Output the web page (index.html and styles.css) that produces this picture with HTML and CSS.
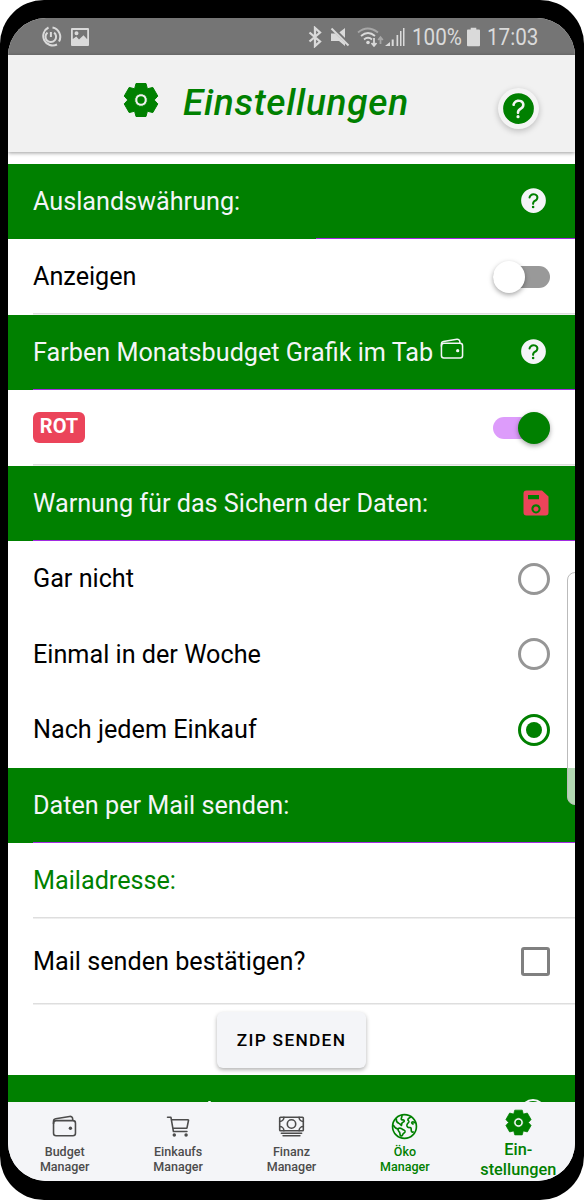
FILE: index.html
```html
<!DOCTYPE html>
<html lang="de">
<head>
<meta charset="utf-8">
<title>Einstellungen</title>
<link rel="stylesheet" href="styles.css">
</head>
<body>
<svg class="defs" width="0" height="0">
  <symbol id="gear" viewBox="-18 -18 36 36">
    <path fill="currentColor" stroke="currentColor" stroke-width="1" stroke-linejoin="round" fill-rule="evenodd" d="M-5-16.500H5L6.400-11.200L11.800-12.600L16.800-3.900L13.200 0L16.800 3.900L11.800 12.600L6.400 11.200L5 16.500H-5L-6.400 11.200L-11.800 12.600L-16.800 3.900L-13.200 0L-16.800-3.900L-11.800-12.600L-6.400-11.200zM0-6.300A6.300 6.300 0 1 0 .01-6.300z"/>
    <circle r="3.700" fill="currentColor"/>
  </symbol>
  <symbol id="wallet" viewBox="0 0 512 512">
    <g fill="none" stroke="currentColor" stroke-width="30" stroke-linejoin="round">
      <rect x="48" y="144" width="416" height="288" rx="48"/>
      <path d="M411.36 144v-30A50 50 0 00352 64.9L88.64 109.85A50 50 0 0048 159v49"/>
    </g>
    <circle cx="368" cy="288" r="32" fill="currentColor"/>
  </symbol>
  <symbol id="help" viewBox="0 0 512 512">
    <path fill-rule="evenodd" fill="currentColor" d="M256 64a192 192 0 100 384 192 192 0 100-384zM250 378a20 20 0 1120-20 20 20 0 01-20 20zM284.700 276.800C268.500 287.700 266 297.500 266 308c0 10-7 16-16 16s-16-7-16-16c0-24 11-42.500 33-58 21-14 33-23 33-42 0-13-7.500-23-22-30-4-1.500-12-3-21-3-12 0-22 3-30 10-14 12-16 24-16 26a16 16 0 01-32-2c0-3 2-28 27-48 13-11 29-16 50-17 14 0 28 3 37 7 26 12 39 32 39 57 0 37-25 54-47.300 68.800z"/>
  </symbol>
</svg>
<div class="phone">
<div class="screen">
  <div class="status">
    <svg class="st-power" viewBox="0 0 22 22" fill="none" stroke="currentColor" stroke-width="2"><path d="M8.500 1.500A9.500 9.500 0 1 0 17 18.500M12.500 1.500a9.500 9.500 0 0 1 6.500 14"/><path d="M7.500 6.600a5.300 5.300 0 1 0 6.600 0"/><path d="M10.900 6v5"/></svg>
    <svg class="st-photo" viewBox="0 0 20 20"><path fill="currentColor" fill-rule="evenodd" d="M2 1h16a1 1 0 0 1 1 1v16a1 1 0 0 1-1 1H2a1 1 0 0 1-1-1V2a1 1 0 0 1 1-1zM2.800 3v9l3.500-2.500 2.700 3 4.500-4.200 3.700 4V3zM6.500 4.300a2 2 0 1 1 0 4 2 2 0 0 1 0-4z"/></svg>
    <span class="gap"></span>
    <svg class="st-bt" viewBox="0 0 14 22" fill="none" stroke="currentColor" stroke-width="2.300"><path d="M1.500 6.500l10.500 9-5 4.500V2l5 4.500-10.500 9"/></svg>
    <svg class="st-mute" viewBox="0 0 20 20"><path fill="currentColor" d="M1 6.500h4.200l9.800 9.800V19l-6-5H1zM8.500 6L15 1v11.500z"/><path stroke="#757575" stroke-width="1.500" d="M3 0l16 16"/><path stroke="currentColor" stroke-width="2" d="M1.500 1.500L18.500 18.500"/></svg>
    <svg class="st-wifi" viewBox="0 0 27 22" fill="none" stroke="currentColor" stroke-width="1.800"><path opacity=".5" d="M1 6.500q9.500-8 20 0"/><path d="M4 10q7-6 14 0M7 13.500q4-3.500 8 0"/><circle cx="11" cy="16.500" r="1.800" fill="currentColor" stroke="none"/><path d="M17 12v7M14.500 17l2.500 2.800 2.500-2.800"/><path opacity=".5" d="M23.500 18v-6.500M21.200 14l2.300-2.800 2.300 2.800"/></svg>
    <svg class="st-signal" viewBox="0 0 20 20" fill="currentColor"><path d="M0 19l5-4v4zM6.700 12.500h2V19h-2zM11.500 8h1.700v11h-1.700zM15 4h1.500v15H15zM18 1h1.500v18H18z"/></svg>
    <span class="pct">100%</span>
    <svg class="st-batt" viewBox="0 0 14 20" fill="currentColor"><path d="M4 0h6v2h3a1 1 0 0 1 1 1v16a1 1 0 0 1-1 1H1a1 1 0 0 1-1-1V3a1 1 0 0 1 1-1h3z"/></svg>
    <span class="clock">17:03</span>
  </div>
  <header class="header">
    <svg class="h-gear"><use href="#gear"/></svg>
    <h1>Einstellungen</h1>
    <span class="fab"><svg><use href="#help"/></svg></span>
  </header>
  <main class="content">
    <div class="row bar first"><span>Auslandswährung:</span><svg class="help"><use href="#help"/></svg></div>
    <div class="row line"><span>Anzeigen</span><span class="toggle"><i></i></span></div>
    <div class="row bar accent"><span class="farben">Farben Monatsbudget Grafik im Tab</span><svg class="inline-wallet"><use href="#wallet"/></svg><svg class="help"><use href="#help"/></svg></div>
    <div class="row line red-row"><span class="badge">ROT</span><span class="toggle on"><i></i></span></div>
    <div class="row bar accent"><span>Warnung für das Sichern der Daten:</span>
      <svg class="save" viewBox="0 0 26 26"><path fill="#eb445a" fill-rule="evenodd" d="M4 .5h15l6.500 6V22.500a3 3 0 0 1-3 3H3.500a3 3 0 0 1-3-3V3.500a3 3 0 0 1 3-3zM5 5v4.200h11V5zM13 14.200a4.600 4.600 0 1 0 .01 0zm0 2.200a2.500 2.500 0 1 1-.01 0z"/></svg></div>
    <div class="row"><span>Gar nicht</span><span class="radio"></span></div>
    <div class="row"><span>Einmal in der Woche</span><span class="radio"></span></div>
    <div class="row"><span>Nach jedem Einkauf</span><span class="radio on"></span></div>
    <div class="row bar accent"><span>Daten per Mail senden:</span></div>
    <div class="row line"><span class="green">Mailadresse:</span></div>
    <div class="row line tall"><span>Mail senden bestätigen?</span><span class="check"></span></div>
    <div class="zip"><button>ZIP SENDEN</button></div>
    <div class="row bar peek"><i class="peek-dot"></i><i class="peek-ring"></i></div>
  </main>
  <nav class="tabs">
    <div class="tab"><svg><use href="#wallet"/></svg><span>Budget<br>Manager</span></div>
    <div class="tab"><svg viewBox="0 0 512 512"><g fill="none" stroke="currentColor" stroke-width="30" stroke-linecap="round" stroke-linejoin="round"><path d="M48 80h64l48 272h256M160 288h249.440a8 8 0 007.850-6.430l28.800-144a8 8 0 00-7.850-9.570H128"/><circle cx="176" cy="416" r="18" fill="currentColor"/><circle cx="400" cy="416" r="18" fill="currentColor"/></g></svg><span>Einkaufs<br>Manager</span></div>
    <div class="tab"><svg viewBox="0 0 512 512"><g fill="none" stroke="currentColor" stroke-width="30" stroke-linecap="round" stroke-linejoin="round"><rect x="32" y="80" width="448" height="256" rx="16"/><path d="M64 384h384M96 432h320M480 160a80 80 0 01-80-80M32 160a80 80 0 0080-80M480 256a80 80 0 00-80 80M32 256a80 80 0 0180 80"/><circle cx="256" cy="208" r="80"/></g></svg><span>Finanz<br>Manager</span></div>
    <div class="tab active"><svg viewBox="0 0 26 26" fill="none" stroke="currentColor" stroke-width="1.600" stroke-linejoin="round"><circle cx="13" cy="13" r="11.500"/><path d="M5 5c-.2 2.500.5 4 2.500 4.800C9 10.300 9.300 11.500 10 12c.6-1.200-.2-2 1-2.700 1.500-.8 2.300-1.200 1.500-2.300-.8-1-2 .3-2.600-.8C9.500 5 11 4 10.500 1.900"/><path d="M2 11.500c1.500 2.500 3 4 5 4.200M7 15c1.500-.9 3-.3 4.200.8 1 .9 2.800.8 2.300 2.300-.6 1.300-1.700 1.200-2.200 2.600-.3 1-1.300 1.800-2 1.300-1-.8-.3-2.400-1.200-3.600C7.300 17.400 6.200 16.500 7 15z"/><path d="M19 3.500c-.8 1.600-2.700 1.200-2.700 2.900 0 1.200 1.300 1 .9 2.300-.4 1-2.100 1.500-1.900 3.500.2 1.600 1.500 2 2.800 1.800 1.500-.2 1.300 1.300 1.400 2.700.1 1.700 1.200 2.300 2.500 1.300M23.700 9.500c-1.500-.3-2.200-1.800-3.500-.8-.8.800.4 1.800 1.700 1.900"/></svg><span>Öko<br>Manager</span></div>
    <div class="tab active current"><svg><use href="#gear"/></svg><span>Ein-<br>stellungen</span></div>
  </nav>
  <div class="edge-handle"></div>
</div>
</div>
</body>
</html>
```
FILE: styles.css
```css
* { box-sizing: border-box; }
body { margin: 0; background: #fff; font-family: Roboto, "Liberation Sans", sans-serif; color: #000; }
.defs { display: block; position: absolute; }
.phone { width: 584px; height: 1200px; padding: 18px 9px 19px 8px; background: #000; border-radius: 44px; }
.screen { position: relative; display: flex; flex-direction: column; height: 1163px; overflow: hidden; border-radius: 38px; background: #fff; }
svg { display: block; flex: none; }

.status { height: 37px; flex: none; display: flex; align-items: center; background: #757575; color: #dadada; padding: 0 36px 0 32px; font-size: 24px; white-space: nowrap; }
.st-power { width: 22px; height: 22px; margin-right: 8px; }
.st-photo { width: 20px; height: 20px; }
.gap { flex: 1; }
.st-bt { width: 14px; height: 22px; margin-right: 8px; }
.st-mute { width: 20px; height: 20px; margin-right: 7px; }
.st-wifi { width: 27px; height: 22px; margin-right: 1px; }
.st-signal { width: 20px; height: 20px; margin-right: 7px; }
.pct { width: 49px; margin-right: 6px; transform: scaleX(.86); transform-origin: left; }
.st-batt { width: 13px; height: 20px; margin-right: 7px; }
.clock { width: 52px; transform: scaleX(.86); transform-origin: left; }

.header { height: 97px; flex: none; display: flex; align-items: center; background: #f1f1f1; color: #008000; padding: 0 36px 5px 115px; box-shadow: 0 1px 4px rgba(0,0,0,.4); position: relative; }
.h-gear { width: 36px; height: 36px; margin: -2px 24px 0 0; }
h1 { margin: 3px 0 0; font-size: 37px; line-height: 44px; font-style: italic; font-weight: 500; flex: 1; letter-spacing: .7px; }
.fab { width: 41px; height: 41px; border-radius: 50%; background: #f4f4f4; box-shadow: 0 2px 6px rgba(0,0,0,.22); display: grid; place-items: center; margin-top: 14px; }
.fab svg { width: 41px; height: 41px; }

.content { flex: 1; min-height: 0; overflow: hidden; padding-top: 11.700px; font-size: 25.200px; }
.row { height: 75.500px; display: flex; align-items: center; padding: 0 25px; position: relative; white-space: nowrap; }
.row > span:first-child { flex: 1; }
.bar { background: #008000; color: #f4f5f8; }
.bar.first { background: linear-gradient(#a22be2, #a22be2) 308px 100% / 100% 1.500px no-repeat #008000; }
.bar.accent { background: linear-gradient(#a22be2, #a22be2) 25px 100% / 100% 1.500px no-repeat #008000; }
.line { background: linear-gradient(#dedede, #dedede) 25px 100% / 100% 1.500px no-repeat; }
.tall { height: 86px; }
.green { color: #008000; }
.help { width: 33px; height: 33px; margin-top: -1px; }
.row > span.farben:first-child { flex: none; }
.inline-wallet { width: 26px; height: 26px; margin: -7px auto 0 6px; }
.row > span.badge:first-child { flex: none; margin-right: auto; }
.badge { width: 52px; height: 31px; border-radius: 6px; background: #eb445a; color: #fff; font-size: 20px; font-weight: 700; line-height: 29px; text-align: center; }
.toggle { width: 57px; height: 22px; border-radius: 11px; background: #999; display: flex; align-items: center; }
.toggle i { width: 32px; height: 32px; flex: none; border-radius: 50%; background: #fff; box-shadow: 0 2px 5px rgba(0,0,0,.35); }
.toggle.on { background: #dd9cfb; justify-content: flex-end; }
.toggle.on i { background: #008000; }
.save { width: 26px; height: 26px; margin-right: 1px; }
.radio { width: 32px; height: 32px; border-radius: 50%; border: 3px solid #969696; display: grid; place-items: center; }
.radio.on { border-color: #008000; }
.radio.on::after { content: ""; width: 16px; height: 16px; border-radius: 50%; background: #008000; }
.check { width: 29px; height: 29px; border: 3px solid #808080; border-radius: 3px; }
.zip { height: 70px; display: flex; justify-content: center; padding-top: 7px; }
button { width: 149px; height: 56px; border: 0; border-radius: 6px; background: #f4f5f8; box-shadow: 0 2px 4px rgba(0,0,0,.3); font: 500 17.300px Roboto, sans-serif; letter-spacing: 1.300px; color: #000; padding: 0; }
.peek { align-items: flex-start; }
.peek-dot { width: 3px; height: 3px; margin: 26px auto 0 175px; background: #f4f5f8; border-radius: 1px; }
.peek-ring { width: 26px; height: 26px; margin: 24px 4px 0 0; border: 2px solid #f4f5f8; border-radius: 50%; }

.tabs { height: 79px; flex: none; background: #f4f5f8; color: #4c4c4c; display: grid; grid-template-columns: repeat(5, 1fr); font-size: 12.500px; font-weight: 500; line-height: 14.700px; text-align: center; }
.tab { display: flex; flex-direction: column; align-items: center; padding-top: 11px; }
.tab svg { width: 27px; height: 27px; margin-bottom: 5px; }
.tab.active { color: #008000; }
.tab.current { font-size: 16.300px; line-height: 19.500px; padding-top: 7px; }
.tab.current svg { margin-bottom: 4px; }
.edge-handle { position: absolute; right: -10px; top: 554px; width: 18px; height: 233px; border: 1.500px solid #bbb; border-radius: 8px; background: rgba(255,255,255,.7); }
```
